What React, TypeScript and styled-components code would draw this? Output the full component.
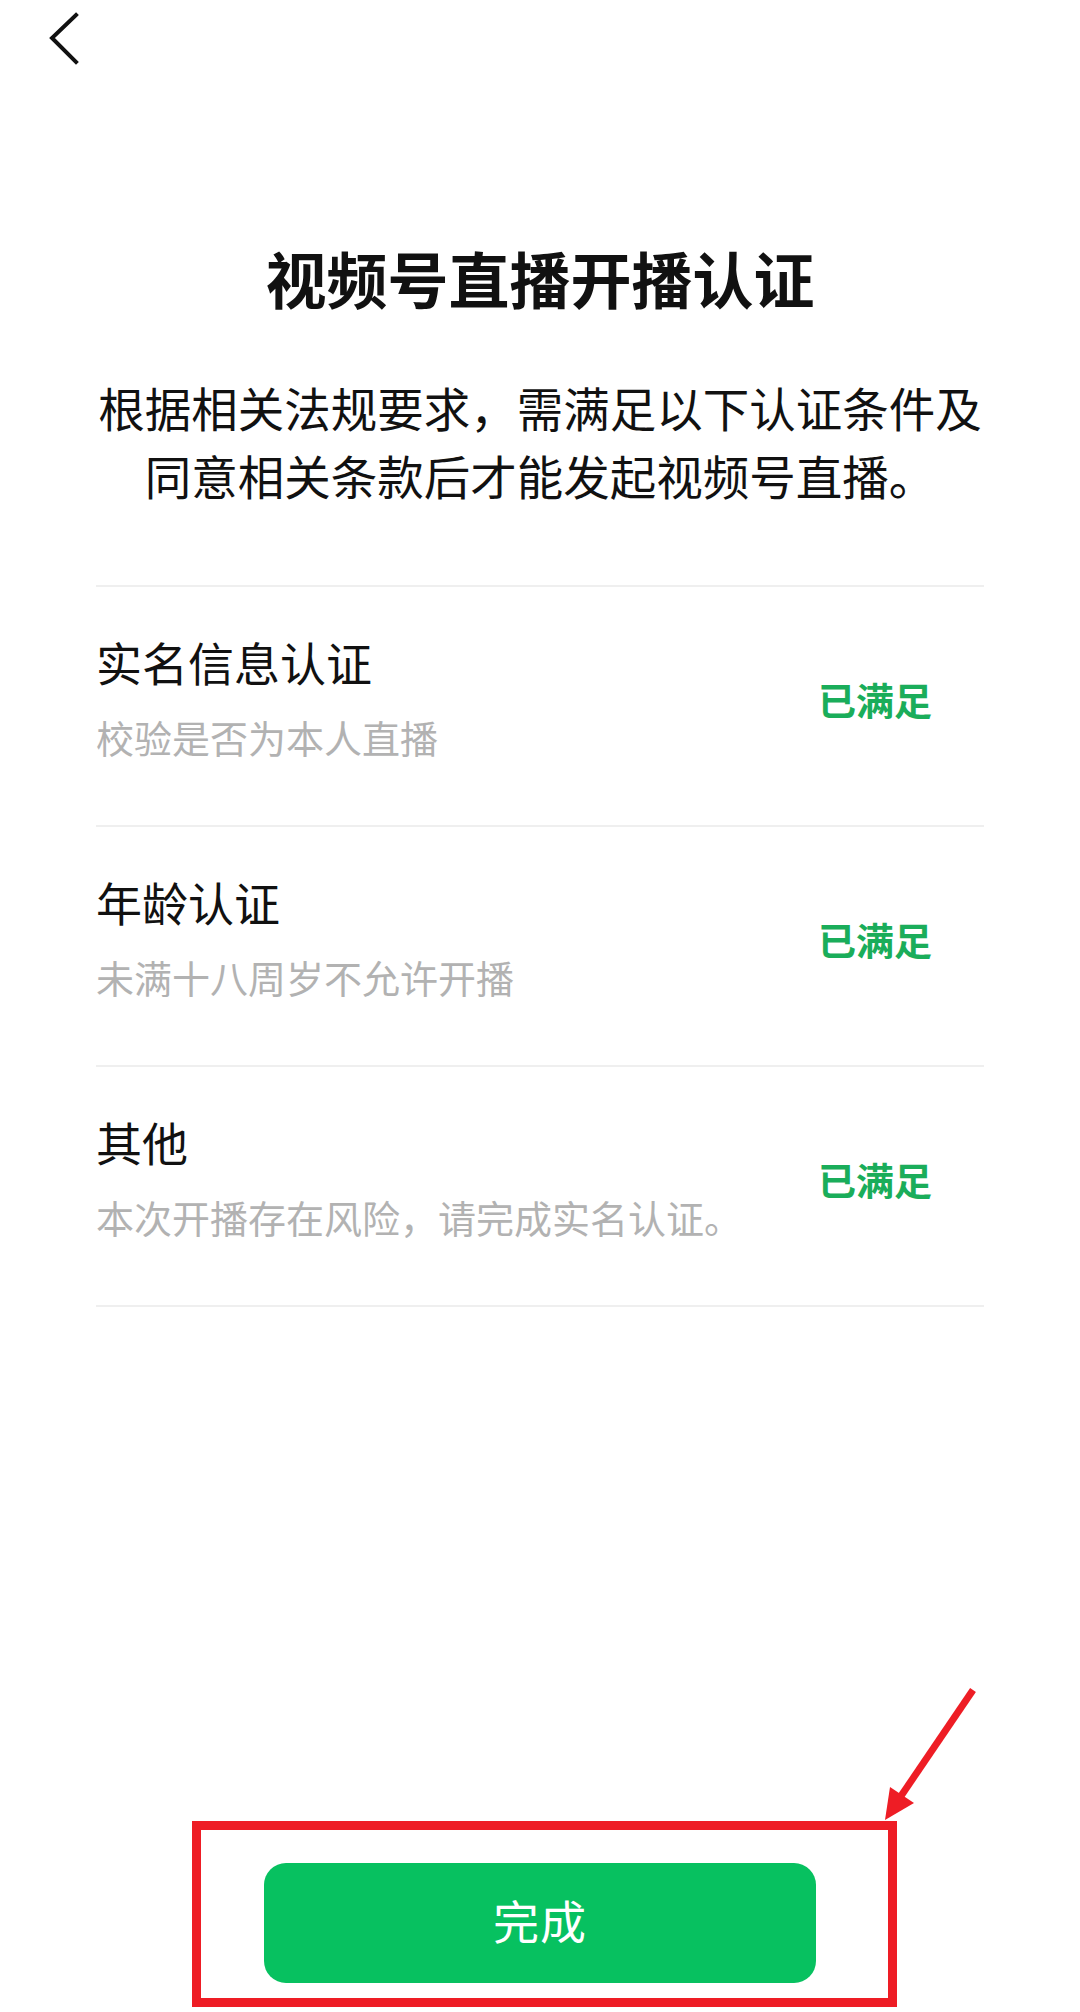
import React from 'react';
import styled, { createGlobalStyle } from 'styled-components';

const GREEN = '#07c160';
const STATUS_GREEN = '#1aad5a';
const RED = '#ee1d25';
const FONT = '"Noto Sans CJK SC", "Noto Sans", sans-serif';

interface Condition {
  id: number;
  name: string;
  hint: string;
  status: string;
}

const conditions: Condition[] = [
  { id: 1, name: '实名信息认证', hint: '校验是否为本人直播', status: '已满足' },
  { id: 2, name: '年龄认证', hint: '未满十八周岁不允许开播', status: '已满足' },
  { id: 3, name: '其他', hint: '本次开播存在风险，请完成实名认证。', status: '已满足' },
];

const BackIcon = () => (
  <svg width="32" height="56" viewBox="0 0 32 56" fill="none">
    <polyline points="28,5 4,28 28,52" stroke="#111" strokeWidth="4" strokeLinecap="square" />
  </svg>
);

const PointerArrow = () => (
  <ArrowSvg width="115" height="150" viewBox="0 0 115 150" fill="none">
    <line x1="103" y1="10" x2="31" y2="116" stroke={RED} strokeWidth="7" />
    <polygon points="15,140 20,107 44,123" fill={RED} />
  </ArrowSvg>
);

const App = () => (
  <>
    <GlobalStyle />
    <Page>
      <NavBar>
        <BackIcon />
      </NavBar>
      <Title>视频号直播开播认证</Title>
      <Intro>
        根据相关法规要求，需满足以下认证条件及
        <br />
        同意相关条款后才能发起视频号直播。
      </Intro>
      <List>
        {conditions.map(({ id, name, hint, status }) => (
          <Row key={id}>
            <Info>
              <Name>{name}</Name>
              <Hint>{hint}</Hint>
            </Info>
            <Status>{status}</Status>
          </Row>
        ))}
      </List>
      <Footer>
        <ButtonWrap>
          <Highlight />
          <PointerArrow />
          <DoneButton>完成</DoneButton>
        </ButtonWrap>
      </Footer>
    </Page>
  </>
);

export default App;

const GlobalStyle = createGlobalStyle`
  html, body {
    margin: 0;
    padding: 0;
    background: #ffffff;
  }

  body {
    font-family: ${FONT};
  }
`;

const Page = styled.div`
  width: 1080px;
  min-height: 2012px;
  display: flex;
  flex-direction: column;
  background: #ffffff;
  overflow: hidden;
`;

const NavBar = styled.div`
  height: 76px;
  box-sizing: border-box;
  padding: 10px 0 0 48px;
  display: flex;
  align-items: flex-start;
`;

const Title = styled.h1`
  margin: 162px 0 0;
  font-size: 61px;
  line-height: 80px;
  font-weight: 700;
  color: #111111;
  text-align: center;
`;

const Intro = styled.p`
  margin: 55px 0 0;
  font-size: 46.5px;
  line-height: 68px;
  font-weight: 400;
  color: #111111;
  text-align: center;
`;

const List = styled.div`
  margin: 76px 96px 0 96px;
  border-top: 2px solid #efefef;
`;

const Row = styled.div`
  display: flex;
  align-items: center;
  justify-content: space-between;
  padding: 44px 52px 63px 0;
  border-bottom: 2px solid #efefef;
`;

const Info = styled.div`
  display: flex;
  flex-direction: column;
`;

const Name = styled.div`
  font-size: 46px;
  line-height: 60px;
  color: #111111;
`;

const Hint = styled.div`
  margin-top: 21px;
  font-size: 38px;
  line-height: 50px;
  color: #b2b2b2;
`;

const Status = styled.div`
  margin-top: 4px;
  font-size: 38px;
  line-height: 50px;
  font-weight: 600;
  color: ${STATUS_GREEN};
`;

const Footer = styled.div`
  margin-top: auto;
  padding-bottom: 29px;
  display: flex;
  justify-content: center;
`;

const ButtonWrap = styled.div`
  position: relative;
  width: 552px;
  height: 120px;
`;

const DoneButton = styled.button`
  width: 100%;
  height: 100%;
  padding: 0 0 8px;
  border: none;
  border-radius: 22px;
  background: ${GREEN};
  color: #ffffff;
  font-family: ${FONT};
  font-size: 46px;
  font-weight: 400;
  letter-spacing: 1px;
  cursor: pointer;
`;

const Highlight = styled.div`
  position: absolute;
  left: -72px;
  top: -42px;
  width: 705px;
  height: 186px;
  box-sizing: border-box;
  border: 9px solid ${RED};
  pointer-events: none;
`;

const ArrowSvg = styled.svg`
  position: absolute;
  left: 606px;
  top: -183px;
  pointer-events: none;
`;
